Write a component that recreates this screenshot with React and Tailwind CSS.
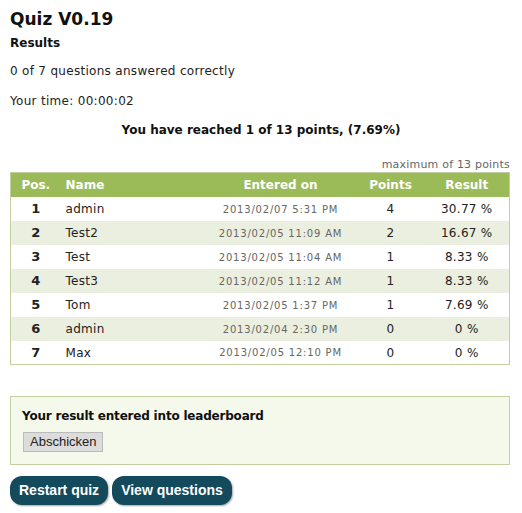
export default function App() {
  const rows = [
    { pos: 1, name: "admin", date: "2013/02/07 5:31 PM", points: 4, result: "30.77 %" },
    { pos: 2, name: "Test2", date: "2013/02/05 11:09 AM", points: 2, result: "16.67 %" },
    { pos: 3, name: "Test", date: "2013/02/05 11:04 AM", points: 1, result: "8.33 %" },
    { pos: 4, name: "Test3", date: "2013/02/05 11:12 AM", points: 1, result: "8.33 %" },
    { pos: 5, name: "Tom", date: "2013/02/05 1:37 PM", points: 1, result: "7.69 %" },
    { pos: 6, name: "admin", date: "2013/02/04 2:30 PM", points: 0, result: "0 %" },
    { pos: 7, name: "Max", date: "2013/02/05 12:10 PM", points: 0, result: "0 %" },
  ];

  const btn = "bg-[#134a5c] text-white font-bold text-[14px] px-[9px] h-[29px] rounded-[12px] shadow-[1px_1px_2px_rgba(0,0,0,0.35)] font-['Liberation_Sans',Arial,sans-serif]";

  return (
    <div className="min-h-screen bg-white text-[#222] font-['DejaVu_Sans',Verdana,sans-serif] text-[12px] px-[10px] pt-[7px]">
      <h1 className="text-[17px] font-bold text-[#111] leading-[24px]">Quiz V0.19</h1>
      <h2 className="text-[12px] font-bold text-[#111] mt-[4px] leading-[16px]">Results</h2>
      <p className="mt-[12px] leading-[16px] tracking-[0.3px]">0 of 7 questions answered correctly</p>
      <p className="mt-[14px] leading-[16px] tracking-[0.3px]">Your time: 00:00:02</p>
      <p className="mt-[13px] leading-[16px] text-center font-bold text-[#111]">You have reached 1 of 13 points, (7.69%)</p>

      <div className="mt-[20px] w-[500px] text-right text-[11px] text-[#666] leading-[14px] tracking-[0.2px]">maximum of 13 points</div>
      <table className="w-[500px] border border-[#c3cfa1] border-collapse table-fixed">
        <thead>
          <tr className="bg-[#9bbb59] text-white font-bold h-[24px]">
            <th className="w-[50px] text-center font-bold">Pos.</th>
            <th className="w-[140px] text-left pl-[5px] font-bold">Name</th>
            <th className="w-[160px] text-center font-bold">Entered on</th>
            <th className="w-[60px] text-center font-bold">Points</th>
            <th className="text-center font-bold pl-[4px]">Result</th>
          </tr>
        </thead>
        <tbody>
          {rows.map((r, i) => (
            <tr key={r.pos} className={i % 2 ? "bg-[#ebefdf] h-[24px]" : "bg-white h-[24px]"}>
              <td className="text-center font-bold text-[13px] pt-[1px]">{r.pos}</td>
              <td className="pl-[5px] text-[12px] tracking-[0.3px] pt-[1px]">{r.name}</td>
              <td className="text-center text-[10px] text-[#666] tracking-[0.8px] pt-[1px]">{r.date}</td>
              <td className="text-center text-[12px] tracking-[0.3px] pt-[1px]">{r.points}</td>
              <td className="text-center text-[12px] tracking-[0.3px] pt-[1px] pl-[4px]">{r.result}</td>
            </tr>
          ))}
        </tbody>
      </table>

      <div className="mt-[31px] w-[500px] border border-[#c3cfa1] bg-[#f5f9ec] px-[11px] pt-[11px] pb-[12px]">
        <div className="font-bold text-[#111] leading-[16px] tracking-[-0.2px]">Your result entered into leaderboard</div>
        <button className="mt-[8px] ml-[1px] bg-[#dcdcdc] border border-[#bbb] px-[6px] h-[20px] text-[13px] leading-[18px] font-['Liberation_Sans',Arial,sans-serif] text-[#222]">Abschicken</button>
      </div>

      <div className="mt-[11px] flex gap-[4px]">
        <button className={btn}>Restart quiz</button>
        <button className={btn}>View questions</button>
      </div>
    </div>
  );
}
